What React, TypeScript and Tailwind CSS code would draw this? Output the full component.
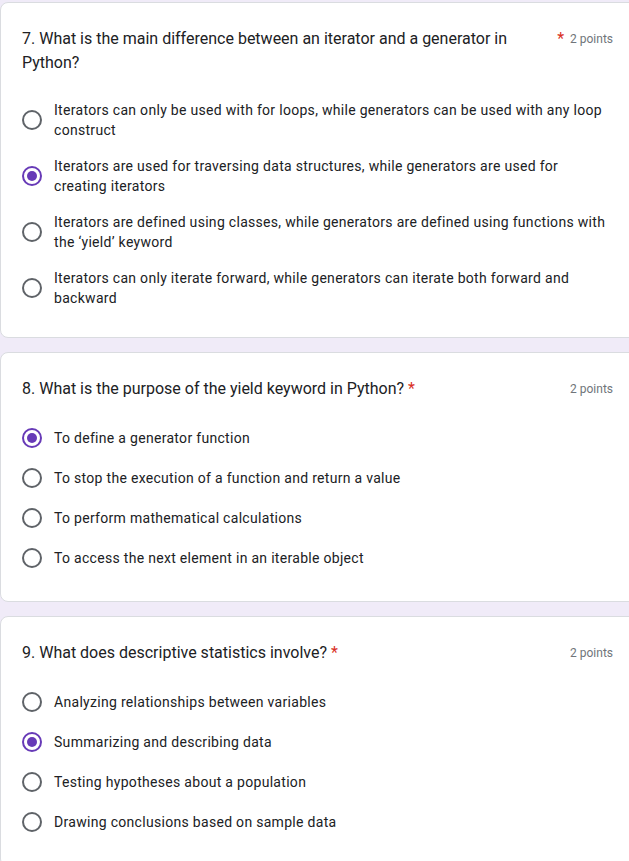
import React from "react";

type Question = {
  title: string;
  points: string;
  options: string[];
  selected: number;
  padBottom: string;
};

const questions: Question[] = [
  {
    title: "7. What is the main difference between an iterator and a generator in Python?",
    points: "2 points",
    selected: 1,
    padBottom: "pb-[29px]",
    options: [
      "Iterators can only be used with for loops, while generators can be used with any loop construct",
      "Iterators are used for traversing data structures, while generators are used for creating iterators",
      "Iterators are defined using classes, while generators are defined using functions with the \u2018yield\u2019 keyword",
      "Iterators can only iterate forward, while generators can iterate both forward and backward",
    ],
  },
  {
    title: "8. What is the purpose of the yield keyword in Python?",
    points: "2 points",
    selected: 0,
    padBottom: "pb-[31px]",
    options: [
      "To define a generator function",
      "To stop the execution of a function and return a value",
      "To perform mathematical calculations",
      "To access the next element in an iterable object",
    ],
  },
  {
    title: "9. What does descriptive statistics involve?",
    points: "2 points",
    selected: 1,
    padBottom: "pb-8",
    options: [
      "Analyzing relationships between variables",
      "Summarizing and describing data",
      "Testing hypotheses about a population",
      "Drawing conclusions based on sample data",
    ],
  },
];

function Radio({ checked }: { checked: boolean }) {
  return (
    <span
      className={`shrink-0 w-5 h-5 rounded-full border-2 flex items-center justify-center ${
        checked ? "border-[#673ab7]" : "border-[#5f6368]"
      }`}
    >
      {checked && <span className="w-2.5 h-2.5 rounded-full bg-[#673ab7]" />}
    </span>
  );
}

function QuestionCard({ q }: { q: Question }) {
  return (
    <div
      className={`w-[637px] bg-white border border-[#dadce0] rounded-lg pl-[21px] pr-[23px] pt-6 ${q.padBottom}`}
    >
      {/* ── Title row ── */}
      <div className="flex items-start">
        <div className="flex flex-1 min-w-0 items-start">
          <div className="min-w-0 text-base leading-6 text-[#202124]">{q.title}</div>
          <span className="shrink-0 pl-1 text-base leading-6 text-[#d93025]">*</span>
        </div>
        <div className="shrink-0 ml-[6px] text-xs leading-6 text-[#70757a]">{q.points}</div>
      </div>

      {/* ── Options ── */}
      <div className="mt-[25px] flex flex-col gap-4">
        {q.options.map((opt, i) => (
          <label key={opt} className="flex items-center gap-3 min-h-6">
            <Radio checked={i === q.selected} />
            <span className="text-sm leading-5 tracking-[0.3px] text-[#202124]">{opt}</span>
          </label>
        ))}
      </div>
    </div>
  );
}

export default function App() {
  return (
    <div
      className="min-h-screen w-full overflow-hidden bg-[#f0ebf8] pt-[2px] flex flex-col gap-[14px]"
      style={{ fontFamily: "Roboto, 'Noto Sans', Arial, sans-serif" }}
    >
      {questions.map((q) => (
        <QuestionCard key={q.title} q={q} />
      ))}
    </div>
  );
}
